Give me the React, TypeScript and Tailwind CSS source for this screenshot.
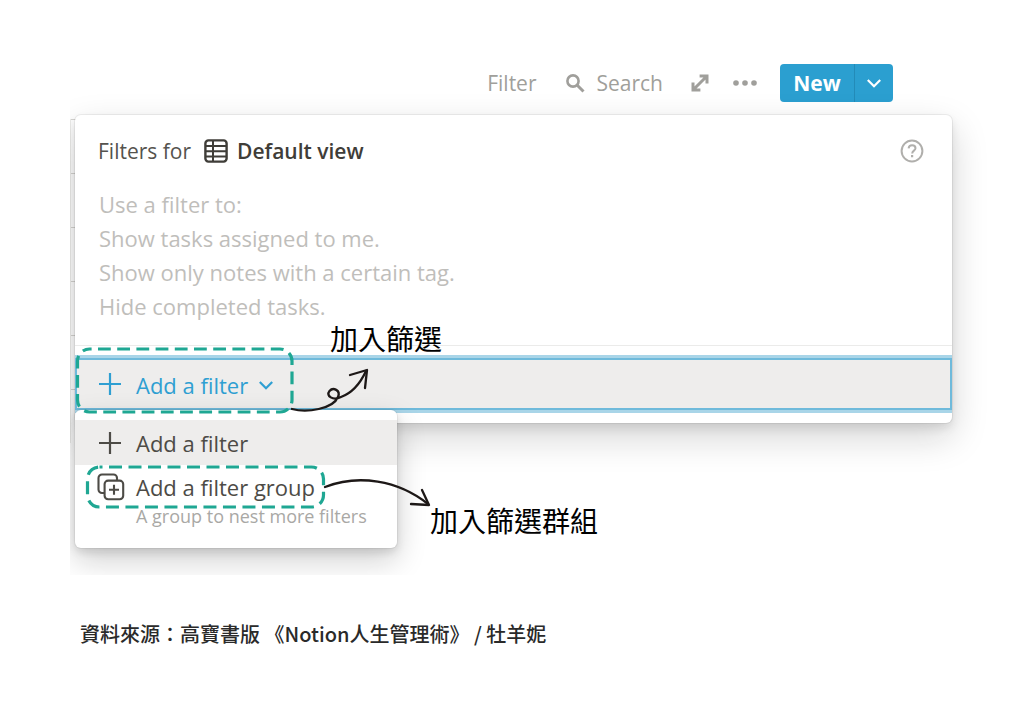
import React from "react";

function PlusIcon() {
  return (
    <svg width="24" height="24" viewBox="0 0 24 24" fill="none" stroke="currentColor" strokeWidth="2.2" aria-hidden="true">
      <path d="M12 1v22M1 12h22" />
    </svg>
  );
}

function ChevronIcon() {
  return (
    <svg width="14" height="14" viewBox="0 0 14 14" fill="none" stroke="currentColor" strokeWidth="2.2" aria-hidden="true">
      <path d="M0.8 4l6.2 6.2L13.2 4" />
    </svg>
  );
}

function SearchIcon() {
  return (
    <svg width="20" height="20" viewBox="0 0 20 20" fill="none" stroke="currentColor" strokeWidth="2.6" aria-hidden="true">
      <circle cx="8" cy="7" r="5.6" />
      <path d="M12 11l6.500 6.500" strokeWidth="3" />
    </svg>
  );
}

function ExpandIcon() {
  return (
    <svg width="18" height="18" viewBox="0 0 18 18" fill="none" stroke="currentColor" strokeWidth="3" aria-hidden="true">
      <path d="M8.600 2H16v7.400M2 8.600V16h7.400M15.500 2.500l-13 13" />
    </svg>
  );
}

function DotsIcon() {
  return (
    <svg width="24" height="6" viewBox="0 0 24 6" fill="currentColor" aria-hidden="true">
      <circle cx="3" cy="3" r="2.8" />
      <circle cx="12" cy="3" r="2.8" />
      <circle cx="21" cy="3" r="2.8" />
    </svg>
  );
}

function TableIcon() {
  return (
    <svg width="24" height="24" viewBox="0 0 24 24" fill="none" stroke="currentColor" strokeWidth="2.4" aria-hidden="true">
      <rect x="1.4" y="1.4" width="21.2" height="21.2" rx="3" />
      <path d="M1.4 7h21.200M1.400 12.200h21.200M1.400 17.400h21.200M9 1.400v21.200" strokeWidth="2" />
    </svg>
  );
}

function HelpIcon() {
  return (
    <svg width="24" height="24" viewBox="0 0 24 24" fill="none" stroke="currentColor" strokeWidth="2" aria-hidden="true">
      <circle cx="12" cy="12" r="10.4" />
      <path d="M8.600 9.400c.2-2 1.600-3.100 3.500-3.100 2 0 3.400 1.100 3.400 2.900 0 2.400-3.300 2.500-3.300 5.200" />
      <path d="M12.100 16v2.200" strokeWidth="2.2" />
    </svg>
  );
}

function GroupIcon() {
  return (
    <svg width="28" height="28" viewBox="0 0 28 28" fill="none" stroke="currentColor" strokeWidth="2.1" aria-hidden="true">
      <rect x="7.600" y="7.600" width="18.600" height="18.600" rx="3.5" />
      <path d="M7.600 20H5a3.500 3.500 0 0 1-3.500-3.500V5A3.500 3.500 0 0 1 5 1.500h11.500A3.500 3.500 0 0 1 20 5v2.600M17 11.800v10M12 16.800h10" />
    </svg>
  );
}

function Annotations() {
  return (
    <svg className="pointer-events-none absolute left-0 top-0" width="640" height="560" viewBox="0 0 640 560" fill="none" aria-hidden="true">
      <g stroke="#1fa793" strokeWidth="3.2">
        <rect x="77.500" y="349" width="214.500" height="63" rx="12" strokeDasharray="12.8 6.4" strokeDashoffset="-8.5" />
        <rect x="87.500" y="467" width="236" height="40" rx="12" strokeDasharray="13 6.5" strokeDashoffset="-9.5" />
      </g>
      <g stroke="#1d1817" strokeWidth="2.3" strokeLinecap="round" strokeLinejoin="round">
        <path d="M292 409C307 413 333 409 338 397C341 390 333 387 329.500 391C325.500 396 333 401 341 397C352 393 360 384 366 371" />
        <path d="M350 375L367 370L365 388" />
        <path d="M325 487C358 474 398 480 428 504" />
        <path d="M422 490L429 505L411 504" />
      </g>
    </svg>
  );
}

const hints = [
  "Use a filter to:",
  "Show tasks assigned to me.",
  "Show only notes with a certain tag.",
  "Hide completed tasks.",
];

export default function App() {
  return (
    <main className="relative min-h-screen bg-white font-['Open_Sans','Noto_Sans_CJK_TC',sans-serif] text-[21px] text-[#55534e]">
      <section className="relative ml-[70px] overflow-hidden pb-[152px] pl-[5px] pr-[72px] pt-16">
        <div className="absolute left-0 top-[119px] grid w-4 auto-rows-[54px] border-l border-[#ededeb]">
          <span className="border-t border-[#d5d4d1]" />
          <span className="border-t border-[#d5d4d1]" />
          <span className="border-t border-[#d5d4d1]" />
          <span className="border-t border-[#d5d4d1]" />
          <span className="border-t border-[#d5d4d1]" />
          <span className="border-t border-[#d5d4d1]" />
        </div>

        <header className="flex h-[38px] items-center justify-end pr-[59px] text-[#a09f9b]">
          <button type="button" className="pt-0.5">Filter</button>
          <button type="button" className="ml-7 flex items-center gap-3 pt-0.5">
            <SearchIcon />
            Search
          </button>
          <button type="button" aria-label="Expand" className="ml-7">
            <ExpandIcon />
          </button>
          <button type="button" aria-label="More" className="ml-6">
            <DotsIcon />
          </button>
          <div className="ml-[23px] flex h-full overflow-hidden rounded bg-[#2b9fd0] text-white">
            <button type="button" className="w-[75px] border-r border-[#238bb8] pt-0.5 font-bold">New</button>
            <button type="button" aria-label="New options" className="grid w-[38px] place-items-center">
              <ChevronIcon />
            </button>
          </div>
        </header>

        <div className="relative mt-[13px]">
          <div className="overflow-hidden rounded-md bg-white pb-[13px] shadow-[0_0_0_1px_rgba(15,15,15,0.06),0_5px_10px_rgba(15,15,15,0.1),0_14px_36px_rgba(15,15,15,0.18)]">
            <div className="flex h-[72px] items-center pl-[23px] pr-7">
              <span className="pt-0.5">Filters for</span>
              <span className="ml-[13px] flex items-center gap-[9px] font-semibold text-[#3f3d38]">
                <TableIcon />
                <span className="pt-0.5">Default view</span>
              </span>
              <button type="button" aria-label="Help" className="ml-auto text-[#b0afac]">
                <HelpIcon />
              </button>
            </div>
            <div className="border-b border-[#ebebea] pb-[22px] pl-6 text-[22px] leading-[34px] text-[#bfbebb]">
              {hints.map((hint) => (
                <p key={hint}>{hint}</p>
              ))}
            </div>
            <button
              type="button"
              className="mt-3 flex h-[52px] w-full items-center gap-[14px] border-2 border-[#6fbadb] bg-[#eeedec] pl-[21px] text-[22px] text-[#2f9fd2] shadow-[0_0_0_3px_#a9d5e8]"
            >
              <PlusIcon />
              <span className="flex items-center gap-[11px] pt-0.5">
                Add a filter
                <ChevronIcon />
              </span>
            </button>
          </div>

          <div className="absolute left-0 top-[295px] w-[322px] rounded-md bg-white pb-[17px] pt-[10px] text-[22px] text-[#4d4b46] shadow-[0_0_0_1px_rgba(15,15,15,0.05),0_4px_8px_rgba(15,15,15,0.12),0_12px_30px_rgba(15,15,15,0.2)]">
            <button type="button" className="flex h-[45px] w-full items-center gap-[14px] bg-[#eeedec] pl-[23px]">
              <PlusIcon />
              <span className="pt-0.5">Add a filter</span>
            </button>
            <button type="button" className="flex w-full gap-[11px] pl-[22px] pt-2 text-left">
              <GroupIcon />
              <span>
                <span className="block leading-7">Add a filter group</span>
                <span className="block text-lg leading-[30px] text-[#a9a8a5]">A group to nest more filters</span>
              </span>
            </button>
          </div>
        </div>
      </section>

      <Annotations />
      <p className="absolute left-[330px] top-[320px] text-[28px] leading-[38px] text-black">加入篩選</p>
      <p className="absolute left-[430px] top-[502px] text-[28px] leading-[38px] text-black">加入篩選群組</p>

      <footer className="px-20 pb-14 pt-11 font-['Noto_Sans_CJK_TC',sans-serif] text-xl font-medium leading-[30px] text-[#2a2a2a]">
        資料來源：高寶書版 《Notion人生管理術》 / 牡羊妮
      </footer>
    </main>
  );
}
